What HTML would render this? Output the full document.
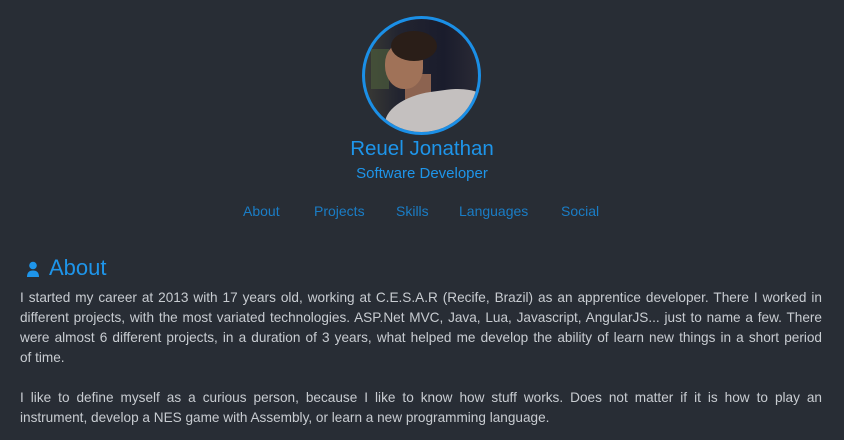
<!DOCTYPE html>
<html><head><meta charset="utf-8"><style>
body{margin:0;background:#282d35;width:844px;height:440px;overflow:hidden;font-family:"Liberation Sans",sans-serif;}
.av{position:absolute;left:362px;top:16px;width:113px;height:113px;border:3px solid #1b8fe6;border-radius:50%;overflow:hidden;background:linear-gradient(90deg,#3a3a35 0,#222430 30%,#1a1c2c 70%,#2a2a35 100%);}
.shirt{position:absolute;left:20px;top:72px;width:110px;height:60px;background:#c4c0bf;border-radius:45% 40% 0 0;transform:rotate(-8deg);}
.neck{position:absolute;left:40px;top:55px;width:26px;height:30px;background:#8c6350;}
.hair{position:absolute;left:26px;top:12px;width:46px;height:30px;background:#2a1e18;border-radius:50%;}
.face{position:absolute;left:20px;top:24px;width:38px;height:46px;background:#a07258;border-radius:45% 40% 45% 50%;}
.lights{position:absolute;left:6px;top:30px;width:18px;height:40px;background:#4a5a3a;opacity:.7}
.c{position:absolute;left:0;width:844px;text-align:center;color:#1e95ea;}
.nav{position:absolute;top:203px;font-size:14px;color:#1a7dc6;}
.nav span{position:absolute;}
h2{position:absolute;left:49px;top:255px;margin:0;font-weight:normal;font-size:22px;color:#1e95ea;}
.p{position:absolute;left:20px;width:802px;color:#c8ccd1;font-size:13.6px;line-height:20px;}
.p div{text-align:justify;text-align-last:justify;white-space:nowrap;overflow:visible}
.p div.l{text-align-last:left}
</style></head><body>
<div class="av"><div class="lights"></div><div class="neck"></div><div class="face"></div><div class="hair"></div><div class="shirt"></div></div>
<div class="c" style="top:137px;font-size:20.5px;">Reuel Jonathan</div>
<div class="c" style="top:165px;font-size:15px;">Software Developer</div>
<div class="nav"><span style="left:243px">About</span><span style="left:314px">Projects</span><span style="left:396px">Skills</span><span style="left:459px">Languages</span><span style="left:561px">Social</span></div>
<svg style="position:absolute;left:26px;top:261px" width="14" height="16" viewBox="0 0 14 16"><circle cx="7" cy="4.5" r="3.8" fill="#1e95ea"/><path d="M1 16 Q1 9.5 7 9.5 Q13 9.5 13 16Z" fill="#1e95ea"/></svg>
<h2>About</h2>
<div class="p" style="top:288px">
<div style="white-space:normal">I started my career at 2013 with 17 years old, working at C.E.S.A.R (Recife, Brazil) as an apprentice developer. There I worked in</div>
<div style="white-space:normal">different projects, with the most variated technologies. ASP.Net MVC, Java, Lua, Javascript, AngularJS... just to name a few. There</div>
<div style="white-space:normal">were almost 6 different projects, in a duration of 3 years, what helped me develop the ability of learn new things in a short period</div>
<div class="l">of time.</div>
</div>
<div class="p" style="top:388px">
<div style="white-space:normal">I like to define myself as a curious person, because I like to know how stuff works. Does not matter if it is how to play an</div>
<div class="l">instrument, develop a NES game with Assembly, or learn a new programming language.</div>
</div>
</body></html>
